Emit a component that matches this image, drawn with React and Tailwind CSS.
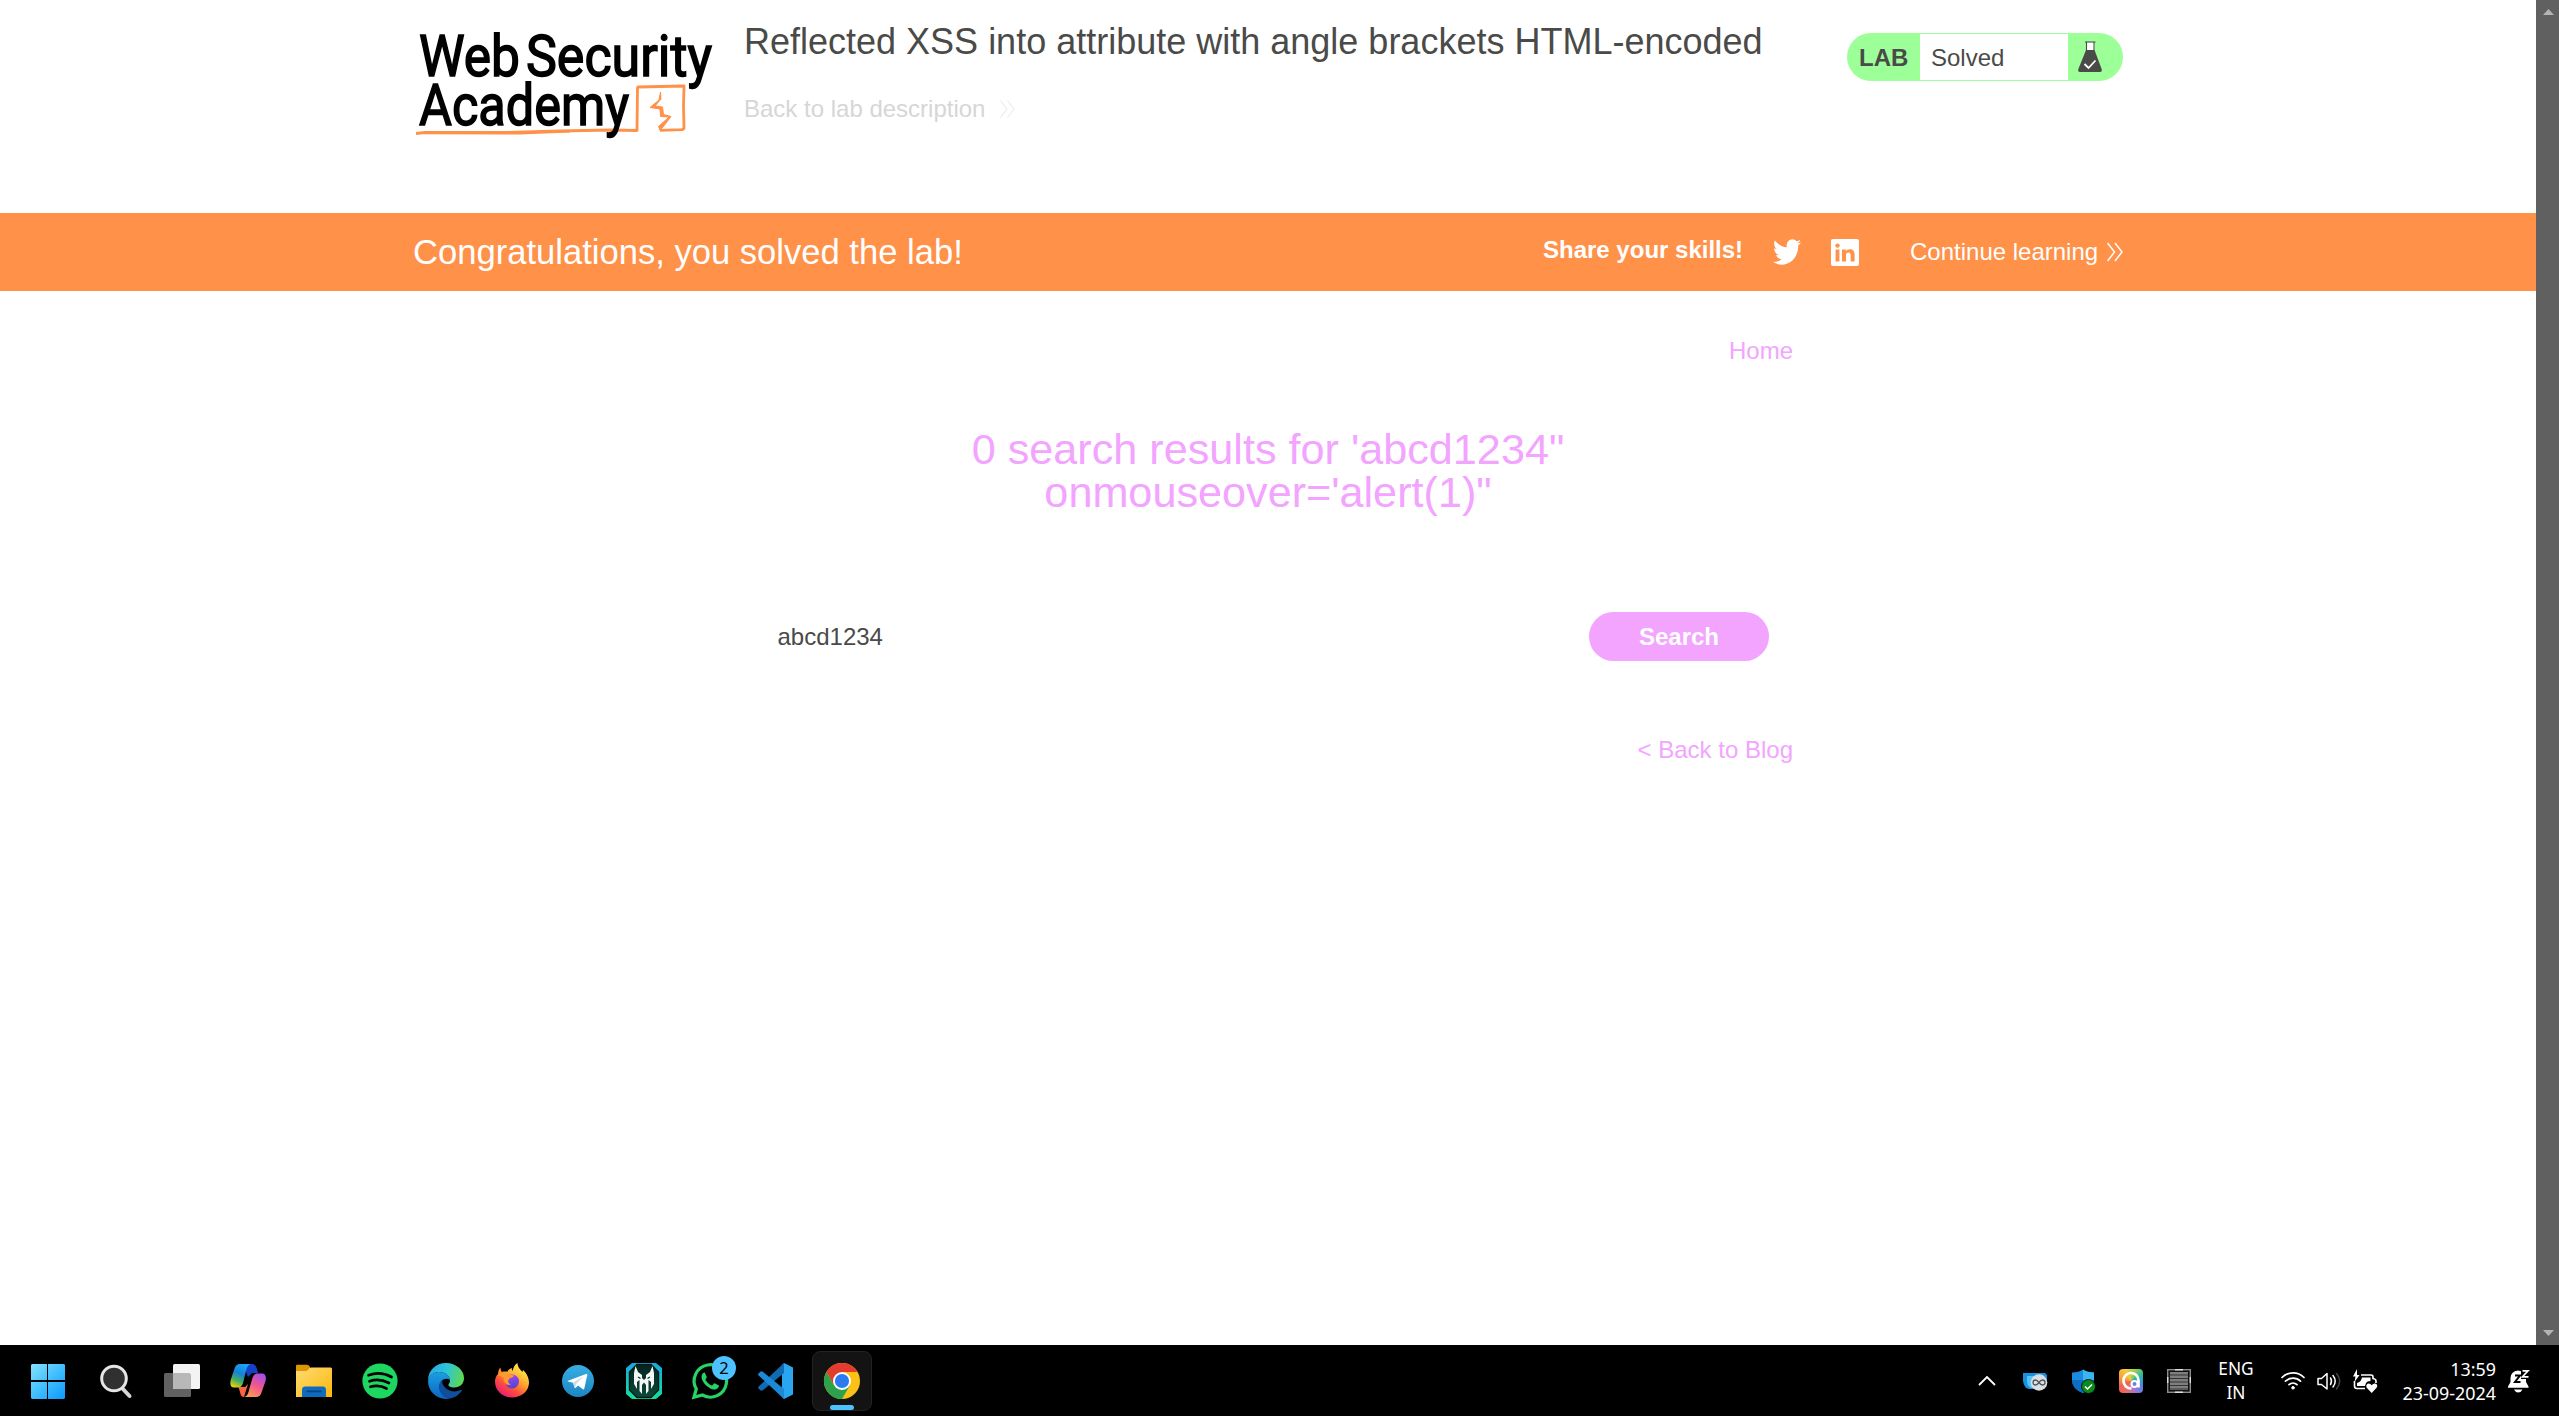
import React from "react";

const Logo = () => (
  <svg className="block h-[110px] w-[304px] overflow-visible" viewBox="413 30 304 110">
    <g fill="#000" stroke="#000" strokeWidth="1.5" fontFamily="Roboto, sans-serif" fontWeight="400" fontSize="57">
      <text x="419" y="76" textLength="101" lengthAdjust="spacingAndGlyphs">Web</text>
      <text x="526" y="76" textLength="186" lengthAdjust="spacingAndGlyphs">Security</text>
    </g>
    <path d="M416 133.500L425 132.500L505 132.500L560 131L610 130L637 130.500L637.500 88L638 87L684 86L683.500 106L684 128.500L682 129.700L660 130.300" fill="none" stroke="#ff9149" strokeWidth="2.800" strokeLinejoin="round" />
    <path d="M424 133.600L520 133.800L570 131.800" fill="none" stroke="#ff9149" strokeWidth="1.400" />
    <path d="M660.500 92L659 100L650 107.500L660 109L660.500 116.500L669 117L658.500 126.500L660 130.300L663 127L671 116.500L663.500 114.500L662.500 107L655 106L661 99Z" fill="#ff9149" stroke="#ff9149" strokeWidth="1" strokeLinejoin="round" />
    <text x="419" y="125" fill="#000" stroke="#000" strokeWidth="1.500" fontFamily="Roboto, sans-serif" fontWeight="400" fontSize="57" textLength="210" lengthAdjust="spacingAndGlyphs">Academy</text>
  </svg>
);

const Chevrons = ({ className, color, sw }) => (
  <svg className={className} viewBox="0 0 18 20" fill="none" stroke={color} strokeWidth={sw}>
    <path d="M1.500 1L8.500 10L1.500 19M9 1L16 10L9 19" />
  </svg>
);

const Flask = () => (
  <svg className="h-[32px] w-[26px]" viewBox="0 0 26 32">
    <path d="M9 1.500H17.500V10H9Z" fill="#fff" />
    <path d="M8 1H18.500M9.500 1V10M17 1V10" stroke="#4a4a48" strokeWidth="1.100" fill="none" />
    <path d="M9 9H17.500L24.600 28C25.300 30 24.500 31 23 31H3C1.500 31 0.700 30 1.400 28Z" fill="#4a4a48" />
    <path d="M7.500 23L11.500 27L18.500 19.500" stroke="#fff" strokeWidth="1.800" fill="none" />
  </svg>
);

const Twitter = () => (
  <svg className="h-[26px] w-[28px]" viewBox="0 2 24 20" preserveAspectRatio="none">
    <path fill="#fff" d="M24 4.557c-.883.392-1.832.656-2.828.775 1.017-.609 1.798-1.574 2.165-2.724-.951.564-2.005.974-3.127 1.195-.897-.957-2.178-1.555-3.594-1.555-3.179 0-5.515 2.966-4.797 6.045-4.091-.205-7.719-2.165-10.148-5.144-1.290 2.213-.669 5.108 1.523 6.574-.806-.026-1.566-.247-2.229-.616-.054 2.281 1.581 4.415 3.949 4.890-.693.188-1.452.232-2.224.084.626 1.956 2.444 3.379 4.600 3.419-2.070 1.623-4.678 2.348-7.290 2.040 2.179 1.397 4.768 2.212 7.548 2.212 9.142 0 14.307-7.721 13.995-14.646.962-.695 1.797-1.562 2.457-2.549z" />
  </svg>
);

const LinkedIn = () => (
  <svg className="h-[27px] w-[28px]" viewBox="0 0 28 27">
    <rect width="28" height="27" rx="2" fill="#fff" />
    <g fill="#ff9149">
      <circle cx="6.500" cy="6.600" r="2.200" />
      <path d="M4.600 10.500H8.400V22.500H4.600ZM11 10.500H14.800V12.200C15.500 11 16.900 10.200 18.800 10.200C22.500 10.200 23.600 12.500 23.600 15.800V22.500H19.700V16.600C19.700 15 19.500 13.500 17.500 13.500C15.400 13.500 15 15 15 16.600V22.500H11Z" />
    </g>
  </svg>
);

const icon = "h-[36px] w-[36px] overflow-visible";

const Windows = () => (
  <svg className={icon} viewBox="0 0 36 36">
    <defs><linearGradient id="win" gradientUnits="userSpaceOnUse" x1="0" y1="0" x2="36" y2="36"><stop stopColor="#8ae4ff" /><stop offset=".5" stopColor="#42bfff" /><stop offset="1" stopColor="#0a97ff" /></linearGradient></defs>
    <path fill="url(#win)" d="M2 1H17V17H1V2ZM18 1H34L35 2V17H18ZM1 19H17V36H2L1 35ZM18 19H35V35L34 36H18Z" />
  </svg>
);
const Search = () => (
  <svg className={icon} viewBox="0 0 36 36">
    <path d="M24 25L31.500 33" stroke="#d3d6da" strokeWidth="4" strokeLinecap="round" />
    <circle cx="16" cy="15.500" r="12.300" fill="#303030" stroke="#e6e6e6" strokeWidth="3" />
  </svg>
);
const TaskView = () => (
  <svg className={icon} viewBox="0 0 36 36">
    <rect x="0" y="10" width="27" height="24" rx="1.500" fill="#616161" />
    <rect x="9" y="1" width="27" height="25" rx="1.500" fill="#f3f3f3" />
    <path d="M9 10H25.500L27 11.500V26H10.500L9 24.500Z" fill="#b8b8b8" />
  </svg>
);
const Copilot = () => (
  <svg className={icon} viewBox="0 0 36 36">
    <defs>
      <linearGradient id="cpa" x1=".6" y1="0" x2=".2" y2="1"><stop stopColor="#1ca5f5" /><stop offset=".4" stopColor="#1681d8" /><stop offset=".7" stopColor="#46b05c" /><stop offset="1" stopColor="#f4d20b" /></linearGradient>
      <linearGradient id="cpb" x1=".8" y1="0" x2=".3" y2="1"><stop stopColor="#a34df0" /><stop offset=".5" stopColor="#f0568e" /><stop offset="1" stopColor="#ff9a54" /></linearGradient>
    </defs>
    <path d="M13 1H22C25 1 26 3 27 6L28 10H22L18 14Z" fill="#1740c8" />
    <path d="M8.500 24H15L18 21L14 34C11 34 10.500 31 10 29Z" fill="#ff6440" />
    <path d="M10 1H21C17 2 16.500 6 15.500 10L13 20C12 23 10.500 24.500 8 24.500H4C.5 24.500 -.2 21 .7 17L4.500 5.500C5.500 2.500 7 1 10 1Z" fill="url(#cpa)" />
    <path d="M26 34H14C18 33 18.500 29 19.500 25L22.500 15C23.500 12 25 10.500 27.500 10.500H32C35.500 10.500 36.500 14 35.500 18L31.500 29.500C30.500 32.500 29 34 26 34Z" fill="url(#cpb)" />
  </svg>
);
const Explorer = () => (
  <svg className={icon} viewBox="0 0 36 36">
    <defs><linearGradient id="fol" x2="1" y2="1"><stop stopColor="#ffdc73" /><stop offset="1" stopColor="#fbb70d" /></linearGradient></defs>
    <path d="M0 3C0 2 .6 1.700 1.500 1.700H11C12 1.700 13 2.500 14 4V10H0Z" fill="#dc9800" />
    <path d="M0 8H10C12 8 13 4.500 15 4.500H35L36 5.500V34H0Z" fill="url(#fol)" />
    <path d="M6 34V26.500C6 24.500 7.500 23.500 9 23.500H27C29 23.500 30 25 30 26.500V34Z" fill="#0f6bbd" />
    <rect x="10.500" y="27.500" width="15" height="1.800" rx=".9" fill="#064683" />
  </svg>
);
const Spotify = () => (
  <svg className={icon} viewBox="0 0 36 36">
    <circle cx="18" cy="18" r="17.600" fill="#1ed760" />
    <path d="M6.500 12.200C14 9.500 23 10.500 29.500 14M7.500 18.300C14 16 21 17 27 20M8.500 23.800C14 22.200 20 23 24.500 25.500" fill="none" stroke="#000" strokeWidth="2.700" strokeLinecap="round" />
  </svg>
);
const Edge = () => (
  <svg className={icon} viewBox="0 0 36 36">
    <defs>
      <linearGradient id="ea" x1="0" y1=".3" x2="1" y2=".5"><stop stopColor="#2aa8e8" /><stop offset=".5" stopColor="#2dc5d8" /><stop offset="1" stopColor="#5fd850" /></linearGradient>
      <linearGradient id="eb" x1="0" y1="0" x2="0" y2="1"><stop stopColor="#1ba0e2" /><stop offset="1" stopColor="#0b66c0" /></linearGradient>
    </defs>
    <path d="M0 18C0 7 8 0 18 0C28 0 36 7 36 15C36 21 31.500 24.500 26.500 24.500C22 24.500 20 23 20.500 21.500C21 20.500 22 19.500 22 17.500C22 13 17 9 11 9C5 9 1 13 0 18Z" fill="url(#ea)" />
    <path d="M0 18C1 12 6 9 11 9C17 9 22 13 22 17C18 14 12 17 11.500 23C11 30 17 35 22 35.500C10 38 0 29 0 18Z" fill="url(#eb)" />
    <path d="M14 17C11 20 9.500 25 13 30C16 34.500 20 36 23 35.200C27 34.500 32 31 34 27.500C34 26.800 33.500 26.700 33 27C24 31 14 26 14 17Z" fill="#104f9c" />
  </svg>
);
const Firefox = () => (
  <svg className={icon} viewBox="0 0 36 36">
    <defs>
      <linearGradient id="fx" x1=".85" y1=".1" x2=".25" y2="1"><stop stopColor="#fff44f" /><stop offset=".4" stopColor="#ffa52c" /><stop offset=".7" stopColor="#ff4a3d" /><stop offset="1" stopColor="#e21a7c" /></linearGradient>
      <linearGradient id="fy" x1=".8" y2="1"><stop stopColor="#9a46f2" /><stop offset="1" stopColor="#4c45c8" /></linearGradient>
    </defs>
    <path d="M4 11C4 9 5 6 6.500 4.500C6.500 6.500 7 8 8 9C10 8.500 12 8.500 13.500 8.800C14.500 6.500 16 5.500 18 5C17.800 6 17.800 7 18.500 8C19.500 4 21 1.500 23.500 0C23.500 4 26 6 28.500 9L29 7C32.500 10 35 15 35 19.500C35 28 27.500 34.500 18 34.500C8.500 34.500 1 27.500 1 18.500C1 15.500 2 13 4 11Z" fill="url(#fx)" />
    <circle cx="18" cy="18.500" r="7" fill="url(#fy)" />
    <path d="M4 12C7 8 13 8.500 15 11.500C17 12 19 12 20 12.800C19 15 15.500 14.500 14.500 17C13.500 19 15 21 17 21.500C12 23.500 8.500 18 10 14.500C8 13.800 5.500 13 4 12Z" fill="#ff9a30" />
  </svg>
);
const Telegram = () => (
  <svg className={icon} viewBox="0 0 36 36">
    <defs><linearGradient id="tg" x2="0" y2="1"><stop stopColor="#37aee2" /><stop offset="1" stopColor="#1c86c4" /></linearGradient></defs>
    <circle cx="18" cy="18" r="16" fill="url(#tg)" />
    <path d="M8 17.700L26 11C26.800 10.700 27.500 11.200 27.300 12L24.300 25.500C24 26.500 23.300 26.600 22.600 26.100L18 22.500L15.800 24.800C15.300 25.300 14.800 25 14.600 24.400L13 19.700L8 18.500C7.400 18.300 7.400 17.900 8 17.700Z" fill="#fff" />
    <path d="M13 19.700L23.500 13.500L16 21L15 25Z" fill="#c8daea" />
  </svg>
);
const Predator = () => (
  <svg className={icon} viewBox="0 0 36 36">
    <defs>
      <linearGradient id="pr" x2="0" y2="1"><stop stopColor="#17a7e0" /><stop offset="1" stopColor="#12e09b" /></linearGradient>
      <linearGradient id="ps" x2="0" y2="1"><stop stopColor="#04231f" /><stop offset="1" stopColor="#0c4a38" /></linearGradient>
    </defs>
    <path d="M0 5L6 0H30L36 5V31L30 36H6L0 31Z" fill="url(#pr)" />
    <path d="M3.500 9L11 1.500H25L32.500 9V27L25 34.500H11L3.500 27Z" fill="url(#ps)" stroke="#041a18" strokeWidth="1.400" />
    <path d="M9.500 3L12 9L16 12V15L18 17L20 15V12L24 9L26.500 3L28 10V21L25 26V19L22.500 17V28L20 31V22L18 19.500L16 22V31L13.500 28V17L11 19V26L8 21V10Z" fill="#f4f6f6" />
    <path d="M12 14L14.500 15.500M24 14L21.500 15.500" stroke="#06251f" strokeWidth="1.200" />
  </svg>
);
const WhatsApp = () => (
  <svg className={icon} viewBox="0 0 36 36">
    <path d="M2 34.300L4.300 26A16.200 16.200 0 1 1 10.300 32Z" fill="none" stroke="#25d366" strokeWidth="3.200" />
    <path d="M12.800 9.500C12 9.200 9.500 10.500 9.500 14C9.500 19 17 26.500 22 26.500C25 26.500 27 24.500 26.900 22.500L22.600 20.300C22 20.100 20.500 22.800 19.800 22.600C17.500 21.800 14.500 19 13.500 16.700C13.200 16 15 14.800 14.800 14.200Z" fill="#25d366" />
    <circle cx="32" cy="5" r="12" fill="#4cc2ff" />
    <text x="32" y="11" textAnchor="middle" fontFamily="'Noto Sans', sans-serif" fontSize="16.500" fill="#000">2</text>
  </svg>
);
const VSCode = () => (
  <svg className={icon} viewBox="0 0 36 36">
    <path d="M26 0L35 4.500V31.500L26 36L24 34V2Z" fill="#2aa5f2" />
    <path d="M26 0V10L4.500 27.500L2.500 27.500L.5 25.500C0 24.800 0 24.200 .7 23.500Z" fill="#0f6cb4" />
    <path d="M26 36V26L4.500 8.500H2.500L.5 10.500C0 11.200 0 11.800 .7 12.500Z" fill="#1a8ad8" />
  </svg>
);
const Chrome = () => (
  <svg className={icon} viewBox="0 0 36 36">
    <circle cx="18" cy="18" r="18" fill="#fbc116" />
    <path d="M2.410 9A18 18 0 0 1 33.590 9H18L10.200 22.500Z" fill="#e33b2e" />
    <path d="M2.410 9A18 18 0 0 0 18 36L25.800 22.500H10.200Z" fill="#2da14c" />
    <circle cx="18" cy="18" r="9" fill="#fff" />
    <circle cx="18" cy="18" r="7.100" fill="#2a7bee" />
  </svg>
);

const apps = [Search, TaskView, Copilot, Explorer, Spotify, Edge, Firefox, Telegram, Predator, WhatsApp, VSCode];

const tray = "block h-[24px] w-[24px] overflow-visible";

const Tray = () => (
  <div className="flex h-full items-center">
    <div className="flex w-[48px] justify-center">
      <svg className={tray} viewBox="0 0 24 24"><path d="M4.500 15.500L12 8L19.500 15.500" fill="none" stroke="#fff" strokeWidth="1.800" strokeLinecap="round" /></svg>
    </div>
    <div className="flex w-[48px] justify-center">
      <svg className={tray} viewBox="0 0 24 24">
        <path d="M0 4H22L24 6V12L12 20H6Q1 19 0 12Z" fill="#1693e0" />
        <path d="M4 7H14V19H8Q4 17 4 12Z" fill="#56c3f6" />
        <circle cx="16" cy="13.500" r="8.300" fill="#dcdfe2" />
        <path d="M16 13.500C14.500 11.500 13.500 11 12.500 11A2.500 2.500 0 0 0 12.500 16C13.500 16 14.500 15.500 16 13.500C17.500 11.500 18.500 11 19.500 11A2.500 2.500 0 0 1 19.500 16C18.500 16 17.500 15.500 16 13.500Z" fill="none" stroke="#50565c" strokeWidth="1.300" />
      </svg>
    </div>
    <div className="flex w-[48px] justify-center">
      <svg className={tray} viewBox="0 0 24 24">
        <path d="M1 3.500Q8 3.500 12 .5Q16 3.500 23 3.500V11Q23 20 12 24Q1 20 1 11Z" fill="#1a8bdd" />
        <path d="M12 .5Q16 3.500 23 3.500V11H12Z" fill="#39b5f2" /><path d="M1 11H12V24Q1 20 1 11Z" fill="#0d6fc4" />
        <circle cx="17.500" cy="17.500" r="7" fill="#0c8a1b" stroke="#000" strokeWidth=".8" />
        <path d="M14 17.500L16.500 20L21 15.500" fill="none" stroke="#fff" strokeWidth="1.500" />
      </svg>
    </div>
    <div className="flex w-[48px] justify-center">
      <div className="h-[24px] w-[24px] rounded-[4px] bg-[conic-gradient(from_20deg,#9bd04a,#26b6a8,#4a86e0,#9a78dc,#ee6a6a,#f06050,#f7a13c,#f4cc3c,#9bd04a)]">
        <svg className={tray} viewBox="0 0 24 24" fill="none" stroke="#fff">
          <path d="M12.500 19.500C7.500 19.500 4.500 16 4.500 12A7.500 7.500 0 0 1 19.500 11V18.500" strokeWidth="2.700" />
          <circle cx="15.500" cy="15" r="3" strokeWidth="2" />
        </svg>
      </div>
    </div>
    <div className="flex w-[48px] justify-center">
      <svg className={tray} viewBox="0 0 24 24">
        <rect x=".7" y=".7" width="22.600" height="22.600" fill="#111" stroke="#8c8c8c" strokeWidth="1.400" />
        <rect x="3" y="3" width="18" height="18" fill="#7e7e7e" />
        <path d="M3 6H21M3 9.500H21M3 13H21M3 16.500H21M3 20H21" stroke="#343434" strokeWidth="1" />
        <path d="M8 .7H16M8 23.300H16M.7 8V14M23.300 8V14" stroke="#ddd" strokeWidth="1.400" />
      </svg>
    </div>
    <div className="ml-[8px] w-[50px] text-center text-[17.3px] leading-[23.5px]"><div>ENG</div><div>IN</div></div>
    <div className="ml-[20px] flex gap-[12px]">
      <svg className={tray} viewBox="0 0 24 24" fill="none" stroke="#fff" strokeWidth="1.700" strokeLinecap="round">
        <path d="M1 8.500A15.500 15.500 0 0 1 23 8.500M4.500 12.200A10.800 10.800 0 0 1 19.500 12.200M8 15.700A6 6 0 0 1 16 15.700" /><circle cx="12" cy="18.800" r="1.300" fill="#fff" strokeWidth="1" />
      </svg>
      <svg className={tray} viewBox="0 0 24 24" fill="none" stroke="#fff" strokeWidth="1.500" strokeLinecap="round" strokeLinejoin="round">
        <path d="M1 9.500H4.500L10 4.500V20L4.500 15.500H1ZM13.500 9Q15.500 12.300 13.500 15.500M16 6.500Q20.500 12.300 16 18" /><path d="M19.500 4.500Q26 12.300 19.500 20" stroke="#444" />
      </svg>
      <svg className={tray} viewBox="0 0 24 24">
        <path d="M8 6H18Q20 6 20 8V9.500Q23 10 23 12V14" fill="none" stroke="#fff" strokeWidth="1.600" />
        <path d="M1.500 12V17Q1.500 19.500 4 19.500H12" fill="none" stroke="#fff" strokeWidth="1.600" />
        <path d="M9 8.500H17.500V12Q14 12 13 14L12 17H4V14Q8 13 9 8.500Z" fill="#fff" />
        <path d="M4 0L0 7.500H2.500L1.500 13L6.500 6H4Z" fill="#fff" />
        <path d="M18.700 24L13.500 18.500Q12.500 16 14.500 14.800Q17 14 18.700 16.300Q20.500 14 23 14.800Q25 16 23.800 18.500Z" fill="#fff" />
      </svg>
    </div>
    <div className="ml-[24px] w-[95px] text-right text-[17.9px] leading-[24px] whitespace-nowrap"><div>13:59</div><div>23-09-2024</div></div>
    <svg className="ml-[11px] block h-[24px] w-[24px]" viewBox="0 0 24 24">
      <path d="M1 17.500L3.500 13V9Q4 2 11 1.500Q18.500 2 19 9V13L21.500 17.500V18.800H1Z" fill="#fff" />
      <path d="M7 20.500H15.500Q14 23.500 11.200 23.500Q8.500 23.500 7 20.500Z" fill="#fff" />
      <rect x="14" y="0" width="9" height="10" fill="#000" />
      <path d="M15.500 1.800H21L15.500 7.800H21.500" fill="none" stroke="#fff" strokeWidth="1.700" />
      <path d="M8 6.500H13L8 13H13.500" fill="none" stroke="#000" strokeWidth="2" />
    </svg>
  </div>
);

export default function App() {
  return (
    <div className="flex h-[1416px] w-[2559px] flex-col overflow-hidden bg-white font-['Liberation_Sans',Arial,sans-serif] text-[24px] leading-[36px] text-[#4a4a48]">
      <div className="flex h-[1345px]">
        <main className="flex w-[2536px] flex-col">
          <header className="mx-auto flex h-[213px] w-[1710px]">
            <div className="w-[331px] shrink-0 pt-[30px]"><Logo /></div>
            <div className="grow pt-[15px]">
              <h2 className="text-[36px] leading-[54px] whitespace-nowrap">Reflected XSS into attribute with angle brackets HTML-encoded</h2>
              <a className="mt-[22px] flex items-center whitespace-nowrap text-[#d6d6d6]">
                Back to lab description
                <Chevrons className="ml-[14px] h-[20px] w-[17px]" color="#e4e4e4" sw="1" />
              </a>
            </div>
            <div className="mt-[33px] flex h-[48px] w-[276px] shrink-0 overflow-hidden rounded-full bg-[#9cff98]">
              <p className="w-[73px] pt-[7px] pl-[12px] font-bold">LAB</p>
              <p className="my-[1px] w-[148px] bg-white pt-[6px] pl-[11px]">Solved</p>
              <span className="pt-[8px] pl-[9px]"><Flask /></span>
            </div>
          </header>
          <section className="h-[78px] bg-[#ff9149] text-white">
            <div className="mx-auto flex h-full w-[1710px] items-center justify-between">
              <h4 className="text-[34.6px] leading-[52px] whitespace-nowrap">Congratulations, you solved the lab!</h4>
              <div className="-mr-px flex items-center">
                <span className="-mt-[4px] w-[230px] font-bold whitespace-nowrap">Share your skills!</span>
                <Twitter />
                <span className="ml-[30px]"><LinkedIn /></span>
                <span className="ml-[51px] w-[196px] whitespace-nowrap">Continue learning</span>
                <Chevrons className="h-[20px] w-[18px]" color="#fff" sw="1.5" />
              </div>
            </div>
          </section>
          <div className="mx-auto flex w-[1050px] flex-col text-[#f2a4ff]">
            <nav className="mt-[42px] flex justify-end"><a>Home</a></nav>
            <h1 className="mt-[59px] text-center text-[43.2px] leading-[43.2px]">0 search results for 'abcd1234"<br />onmouseover='alert(1)"</h1>
            <form className="mt-[98px] flex h-[49px] items-center justify-between pr-[24px] pl-[34.5px]">
              <span className="text-[#4a4a48]">abcd1234</span>
              <button type="button" className="h-[49px] w-[180px] rounded-full bg-[#f2a4ff] text-center font-bold text-white">Search</button>
            </form>
            <div className="mt-[71px] flex justify-end"><a>&lt; Back to Blog</a></div>
          </div>
        </main>
        <div className="flex w-[23px] flex-col items-center justify-between bg-[#606060] pt-[9px] pb-[9px]">
          <svg className="ml-[2px] h-[6px] w-[11px]" viewBox="0 0 11 6"><path d="M0 6L5.500 0L11 6Z" fill="#b4b4b4" /></svg>
          <svg className="ml-[2px] h-[6px] w-[11px]" viewBox="0 0 11 6"><path d="M0 0L5.500 6L11 0Z" fill="#b4b4b4" /></svg>
        </div>
      </div>
      <footer className="flex h-[71px] justify-between bg-black pr-[28px] pl-[15px] font-['Noto_Sans',sans-serif] text-white">
        <div className="flex items-center">
          <div className="mr-[2px] flex w-[66px] justify-center"><Windows /></div>
          {apps.map((I, i) => (
            <div key={i} className="flex w-[66px] justify-center"><I /></div>
          ))}
          <div className="relative ml-[3px] flex h-[60px] w-[60px] items-center justify-center rounded-[8px] border border-[#222] bg-[#131313]">
            <Chrome />
            <span className="absolute bottom-0 h-[5px] w-[24px] rounded-full bg-[#4cc2ff]" />
          </div>
        </div>
        <Tray />
      </footer>
    </div>
  );
}
